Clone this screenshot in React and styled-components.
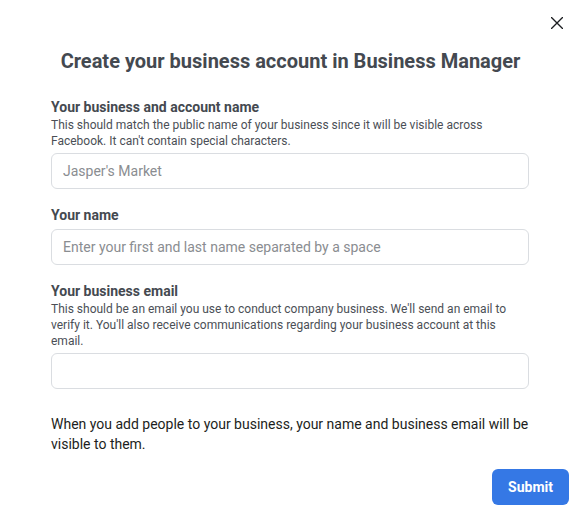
import styled, { createGlobalStyle } from "styled-components"

const GlobalStyle = createGlobalStyle`
	body {
		margin: 0;
		background: #fff;
		font-family: Roboto, "Liberation Sans", Arial, sans-serif;
		-webkit-font-smoothing: antialiased;
	}
`

function App() {
	return (
		<Dialog>
			<GlobalStyle />
			<CloseButton aria-label="Close">
				<svg width="12" height="12" viewBox="0 0 12 12">
					<path d="M0.5 0.5 L11.5 11.5 M11.5 0.5 L0.5 11.5" stroke="#1c1e21" strokeWidth="1.4" strokeLinecap="round" />
				</svg>
			</CloseButton>

			<Title>Create your business account in Business Manager</Title>

			<Form>
				<Field>
					<Label>Your business and account name</Label>
					<Hint>
						This should match the public name of your business since it will be visible across
						Facebook. It can't contain special characters.
					</Hint>
					<Input $gap={4} placeholder="Jasper's Market" />
				</Field>

				<Field>
					<Label>Your name</Label>
					<Input $gap={6} placeholder="Enter your first and last name separated by a space" />
				</Field>

				<Field>
					<Label>Your business email</Label>
					<Hint>
						This should be an email you use to conduct company business. We'll send an email to
						verify it. You'll also receive communications regarding your business account at this
						email.
					</Hint>
					<Input $gap={4} />
				</Field>

				<Notice>
					When you add people to your business, your name and business email will be visible to them.
				</Notice>
			</Form>

			<Footer>
				<SubmitButton>Submit</SubmitButton>
			</Footer>
		</Dialog>
	)
}

const Dialog = styled.div`
	position: relative;
	width: 581px;
	height: 510px;
	box-sizing: border-box;
	padding-top: 49px;
	background: #fff;
`

const CloseButton = styled.button`
	position: absolute;
	top: 17px;
	left: 551px;
	width: 12px;
	height: 12px;
	padding: 0;
	border: 0;
	background: none;
	display: flex;
	cursor: pointer;
`

const Title = styled.h1`
	margin: 0;
	text-align: center;
	font-size: 20px;
	line-height: 24px;
	font-weight: 700;
	color: #444950;
`

const Form = styled.div`
	display: flex;
	flex-direction: column;
	gap: 18px;
	width: 478px;
	margin: 26px 0 0 51px;
`

const Field = styled.div`
	display: flex;
	flex-direction: column;
`

const Label = styled.label`
	font-size: 14px;
	line-height: 16px;
	font-weight: 700;
	color: #444950;
`

const Hint = styled.div`
	margin-top: 2px;
	font-size: 12px;
	line-height: 16px;
	color: #4b4f56;
`

const Input = styled.input`
	margin-top: ${p => p.$gap}px;
	height: 36px;
	box-sizing: border-box;
	padding: 0 11px;
	border: 1px solid #dadde1;
	border-radius: 6px;
	font-family: inherit;
	font-size: 14px;
	color: #1c1e21;
	outline: none;

	&::placeholder {
		color: #8a8d91;
	}
`

const Notice = styled.p`
	margin: 7px 0 0;
	font-size: 14px;
	line-height: 20px;
	color: #1c1e21;
`

const Footer = styled.div`
	display: flex;
	justify-content: flex-end;
	padding: 15px 12px 0 0;
`

const SubmitButton = styled.button`
	width: 77px;
	height: 36px;
	border: 0;
	border-radius: 6px;
	background: #3578e5;
	color: #fff;
	font-family: inherit;
	font-size: 14px;
	font-weight: 700;
	cursor: pointer;
`

export default App
